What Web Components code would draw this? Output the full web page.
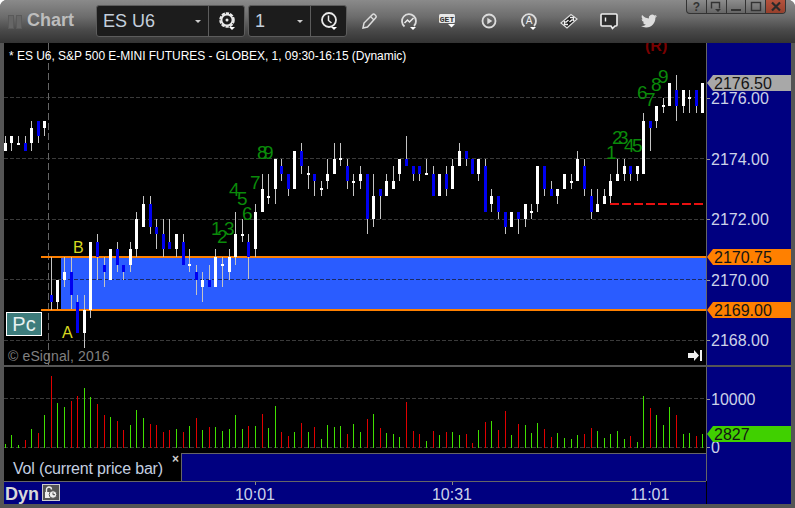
<!DOCTYPE html>
<html>
<head>
<meta charset="utf-8">
<title>Chart</title>
<style>
  html, body { margin: 0; background: #fff; }
  body { font-family: "Liberation Sans", Arial, sans-serif; width: 795px; height: 508px; overflow: hidden; }
</style>
</head>
<body>
<chart-window>
  <chart-toolbar slot="toolbar">
    <symbol-box slot="symbol" value="ES U6" box-width="149" text-size="18" icon="gear"></symbol-box>
    <symbol-box slot="interval" value="1" box-width="99" text-size="18" icon="clock"></symbol-box>
  </chart-toolbar>
  <price-panel slot="price">
    <span slot="title">* ES U6, S&amp;P 500 E-MINI FUTURES - GLOBEX, 1, 09:30-16:15 (Dynamic)</span>
    <span slot="copyright">© eSignal, 2016</span>
  </price-panel>
  <price-axis slot="price-axis">
    <axis-label y="48">2176.00</axis-label>
    <axis-label y="109">2174.00</axis-label>
    <axis-label y="169">2172.00</axis-label>
    <axis-label y="230">2170.00</axis-label>
    <axis-label y="290">2168.00</axis-label>
    <price-tag y="32" color="#a8a8a8">2176.50</price-tag>
    <price-tag y="206" color="#ff8000">2170.75</price-tag>
    <price-tag y="259" color="#ff8000">2169.00</price-tag>
  </price-axis>
  <volume-panel slot="volume"></volume-panel>
  <volume-legend slot="legend">Vol (current price bar)</volume-legend>
  <time-axis slot="time">
    <time-label x="251">10:01</time-label>
    <time-label x="448">10:31</time-label>
    <time-label x="646">11:01</time-label>
  </time-axis>
  <volume-axis slot="volume-axis">
    <axis-label y="25">10000</axis-label>
    <axis-label y="73" style="clip-path: inset(-2px -2px 3px -8px)">0</axis-label>
    <price-tag y="59" color="#40d000">2827</price-tag>
  </volume-axis>
</chart-window>

<script>
// x, wick top, wick bottom, body top, body bottom, colour (w = up, b = down)
const CANDLES = [
  [5,136,151,143,151,"w"],[11,136,151,136,143,"w"],[18,136,145,143,145,"w"],[25,136,151,143,151,"b"],
  [31,121,151,128,143,"w"],[38,121,143,121,136,"b"],[44,121,136,121,128,"w"],[51,257,310,295,302,"b"],
  [57,280,309,280,302,"w"],[64,257,287,272,280,"w"],[71,257,309,272,295,"b"],[77,295,333,302,333,"b"],
  [84,295,348,310,333,"w"],[90,242,318,242,310,"w"],[97,234,280,242,257,"b"],[104,257,287,265,272,"b"],
  [110,249,280,249,280,"w"],[117,242,272,249,265,"b"],[123,265,280,265,272,"b"],[130,242,272,249,265,"w"],
  [136,212,257,219,249,"w"],[143,196,227,204,227,"w"],[150,196,234,204,227,"b"],[156,219,249,227,234,"b"],
  [163,219,257,234,249,"b"],[169,219,249,242,249,"b"],[176,234,257,234,249,"w"],[183,234,265,242,265,"b"],
  [189,249,272,264,266,"w"],[196,265,295,272,280,"b"],[202,272,302,280,287,"w"],[209,265,287,280,287,"b"],
  [215,249,287,257,287,"w"],[222,257,287,264,266,"w"],[229,249,280,257,272,"w"],[235,212,265,234,257,"w"],
  [242,219,242,234,236,"w"],[248,234,279,242,257,"b"],[255,204,257,212,249,"w"],[262,174,212,189,212,"w"],
  [268,174,204,196,198,"w"],[275,159,204,159,189,"w"],[281,159,181,166,174,"b"],[288,174,196,174,189,"b"],
  [294,151,189,151,189,"w"],[301,143,174,151,166,"b"],[308,166,189,173,175,"w"],[314,174,196,174,181,"b"],
  [321,181,196,188,190,"w"],[327,159,189,174,181,"w"],[334,143,174,159,174,"w"],[340,143,166,158,160,"w"],
  [347,159,189,166,181,"b"],[353,174,196,181,183,"w"],[360,166,189,174,181,"w"],[367,174,234,174,219,"b"],
  [373,174,227,196,219,"w"],[380,189,219,189,196,"b"],[386,174,196,181,196,"w"],[393,166,189,181,189,"w"],
  [399,159,181,159,174,"w"],[406,136,166,159,166,"b"],[413,166,181,166,174,"b"],[419,166,181,166,174,"b"],
  [426,159,175,173,175,"w"],[433,166,196,174,196,"b"],[439,174,196,174,196,"w"],[446,166,196,174,189,"b"],
  [452,159,189,166,189,"w"],[459,143,166,151,166,"w"],[466,151,166,151,159,"b"],[472,159,174,159,174,"b"],
  [478,159,181,159,174,"w"],[485,159,212,166,212,"b"],[491,189,212,196,204,"w"],[498,196,219,196,212,"b"],
  [505,212,234,212,227,"b"],[511,212,227,212,227,"w"],[518,212,234,212,219,"b"],[525,204,227,204,219,"w"],
  [531,204,219,211,213,"w"],[537,166,212,166,204,"w"],[544,166,196,166,189,"b"],[551,181,196,189,196,"b"],
  [557,189,204,189,196,"w"],[564,174,189,174,189,"w"],[571,174,189,181,183,"w"],[577,151,181,159,181,"w"],
  [584,159,196,166,189,"b"],[591,189,219,196,212,"b"],[597,189,212,204,212,"w"],[604,189,204,196,204,"w"],
  [610,174,204,181,196,"w"],[617,159,181,174,181,"w"],[624,159,181,166,174,"w"],[630,166,181,166,174,"b"],
  [637,166,181,166,174,"w"],[643,113,174,121,174,"w"],[650,121,151,121,128,"b"],[656,106,128,106,121,"w"],
  [663,98,113,105,107,"w"],[669,83,106,83,106,"w"],[676,75,121,90,106,"b"],[683,90,113,90,106,"w"],
  [689,90,113,97,99,"w"],[696,90,113,90,106,"b"],[702,83,113,83,113,"w"]
];

// bar height per candle: positive is a green bar, negative a red one
const VOLUMES = [
  4,13,3,-8,19,-15,33,-72,45,41,-47,-52,60,51,-44,-33,31,-27,-18,23,38,30,-24,-23,-16,-18,19,-16,22,-30,
  18,-21,21,17,19,33,19,-22,22,-34,20,42,-16,-12,16,-25,16,-21,9,23,21,22,-14,24,16,-29,34,-20,15,14,
  11,-46,-17,-14,7,-17,13,-16,16,13,-14,-5,18,-26,27,-18,-37,13,-24,23,15,25,-19,-11,15,10,9,13,-14,-20,
  17,10,14,17,9,-12,6,52,-40,33,23,41,-33,14,15,-12,14
];

// wave count digits: text, x, baseline
const COUNTS = [
  ["1",211,235],["2",217,243],["3",224,235],["4",229,196],["5",237,205],["6",242,220],["7",250,189],["8",257,159],["9",263,159],
  ["1",606,159],["2",612,144],["3",618,144],["4",624,152],["5",632,152],["6",637,99],["7",645,106],["8",651,91],["9",658,83]
];

const ICONS = {
  gear: `<svg width="20" height="20" viewBox="0 0 20 20"><circle cx="10" cy="9" r="6.500" fill="none" stroke="#e8e8e8" stroke-width="2.600" stroke-dasharray="3.200 .9"/><circle cx="10" cy="9" r="5.500" fill="none" stroke="#e8e8e8" stroke-width="1.800"/><circle cx="10" cy="9" r="1.500" fill="#e8e8e8"/><path d="M12 16h6l-3 3z" fill="#fff"/></svg>`,
  clock: `<svg width="20" height="20" viewBox="0 0 20 20"><circle cx="10" cy="9" r="7" fill="none" stroke="#e8e8e8" stroke-width="1.800"/><path d="M9.500 4.500v5l3 2.500" fill="none" stroke="#e8e8e8" stroke-width="1.500"/><path d="M12 16h6l-3 3z" fill="#fff"/></svg>`,
  pencil: `<svg width="20" height="20" viewBox="0 0 20 20"><path d="M4 17l1-5L13.500 3.500a1.500 1.500 0 0 1 2.200 0l1 1a1.500 1.500 0 0 1 0 2.200L8.500 16z" fill="none" stroke="#ddd" stroke-width="1.500"/><path d="M11.500 5.500l3.500 3.500" stroke="#ddd" stroke-width="1.200"/></svg>`,
  trend: `<svg width="20" height="20" viewBox="0 0 20 20"><path d="M15 15a7 7 0 1 0-9.500 .500" fill="none" stroke="#ddd" stroke-width="1.800"/><path d="M5.500 12l3-3 2 2 4-4" fill="none" stroke="#eee" stroke-width="1.500"/><path d="M11 16h6l-3 3z" fill="#fff"/></svg>`,
  get: `<svg width="22" height="20" viewBox="0 0 22 20"><rect x="1" y="3" width="16" height="9" rx="1.500" fill="#e8e8e8"/><text x="9" y="10.500" text-anchor="middle" font-family="Liberation Mono" font-weight="700" font-size="8" fill="#333">GET</text><path d="M10 13h7l-3.500 3.500z" fill="#fff"/></svg>`,
  play: `<svg width="20" height="20" viewBox="0 0 20 20"><circle cx="10" cy="10" r="6.500" fill="none" stroke="#ddd" stroke-width="1.800"/><path d="M8.300 6.800v6.400l5-3.200z" fill="#ddd"/></svg>`,
  auto: `<svg width="20" height="20" viewBox="0 0 20 20"><path d="M15 15a7 7 0 1 0-9.500 .500" fill="none" stroke="#ddd" stroke-width="1.800"/><text x="10" y="13" text-anchor="middle" font-size="10" fill="#eee" font-family="Liberation Sans">A</text><path d="M11 16h6l-3 3z" fill="#fff"/></svg>`,
  swap: `<svg width="20" height="20" viewBox="0 0 20 20"><path d="M2 12L12 3.500 18 8 8 17z" fill="#1c1c1c" stroke="#ddd" stroke-width="1.200"/><path d="M6.500 11.500l3-2.500M5.500 10v3.500H9M13.500 8.500l-3 2.500M14.500 10V6.500H11" fill="none" stroke="#eee" stroke-width="1.500"/></svg>`,
  talk: `<svg width="20" height="20" viewBox="0 0 20 20"><path d="M3 3h14a1 1 0 0 1 1 1v10a1 1 0 0 1-1 1h-1l-2.500 2.500L12 15H3a1 1 0 0 1-1-1V4a1 1 0 0 1 1-1z" fill="#2e2e2e" stroke="#eee" stroke-width="1.600"/><path d="M6.500 6.500v4" stroke="#eee" stroke-width="1.400"/></svg>`,
  bird: `<svg width="16" height="16" viewBox="0 0 24 24"><path fill="#ddd" d="M23.950 4.570a10 10 0 0 1-2.820.77 4.960 4.960 0 0 0 2.160-2.720c-.95.56-2 .96-3.120 1.190a4.920 4.920 0 0 0-8.380 4.480C7.690 8.090 4.070 6.130 1.640 3.160a4.820 4.820 0 0 0-.66 2.470c0 1.710.87 3.200 2.180 4.080a4.900 4.900 0 0 1-2.230-.62v.06a4.920 4.920 0 0 0 3.950 4.830 5 5 0 0 1-2.210.08 4.940 4.940 0 0 0 4.600 3.420A9.870 9.870 0 0 1 0 19.540a13.940 13.940 0 0 0 7.550 2.210c9.050 0 14-7.500 14-13.980 0-.21 0-.42-.02-.63A9.940 9.940 0 0 0 24 4.590z"/></svg>`
};

// small helper, every element below is the same open shadow + html
class ShadowElement extends HTMLElement {
  constructor() {
    super();
    this.attachShadow({ mode: "open" });
  }
  connectedCallback() {
    this.shadowRoot.innerHTML = this.markup();
  }
}

class ChartWindow extends ShadowElement {
  markup() {
    return `<style>
      :host { display: flex; flex-direction: column; width: 795px; height: 508px; background: #555; border-radius: 7px 7px 0 0; overflow: hidden; }
      .body { height: 461px; margin: 0 4px 4px; display: grid; grid-template-columns: 702px 1px 84px; grid-template-rows: 322px 2px 137px; background: #000; }
      .vline { background: #666; }
      .hline { grid-column: 1 / 4; background: #555; }
      .lower { display: flex; flex-direction: column; }
      .rule { height: 1px; background: #666; flex: none; }
    </style>
    <slot name="toolbar"></slot>
    <div class="body">
      <slot name="price"></slot>
      <div class="vline"></div>
      <slot name="price-axis"></slot>
      <div class="hline"></div>
      <div class="lower">
        <slot name="volume"></slot>
        <div class="rule" style="margin-left:178px"></div>
        <slot name="legend"></slot>
        <div class="rule"></div>
        <slot name="time"></slot>
      </div>
      <div class="vline" style="height:114px"></div>
      <slot name="volume-axis"></slot>
    </div>`;
  }
}

class ChartToolbar extends ShadowElement {
  markup() {
    const cells = ["pencil", "trend", "get", "play", "auto", "swap", "talk", "bird"]
      .map((name) => `<span class="cell">${ICONS[name]}</span>`).join("");
    return `<style>
      :host { display: flex; align-items: center; height: 43px; flex: none; padding-left: 8px; box-sizing: border-box;
        background: linear-gradient(#8a8a8a 0, #6c6c6c 17px, #4a4a4a 30px, #333 43px); }
      .grip { display: flex; gap: 2px; width: 14px; flex: none; }
      .grip i { width: 6px; height: 14px; box-sizing: border-box; border: 1px solid #5a5a5a; background: #666; }
      .name { width: 74px; padding-left: 5px; box-sizing: border-box; flex: none; font: bold 18px "Liberation Sans", sans-serif; color: #bdbdbd; margin-top: -2px; }
      .boxes { display: flex; gap: 3px; flex: none; align-self: flex-start; margin-top: 5px; }
      .icons { display: flex; margin-left: 2px; }
      .cell { width: 40px; height: 30px; display: flex; align-items: center; justify-content: center; margin-top: -2px; }
      .caption { margin-left: auto; margin-right: 9px; align-self: flex-start; display: flex; height: 14px; width: 100px; flex: none;
        border: 1px solid #333; border-top: 0; box-sizing: border-box; border-radius: 0 0 4px 4px; overflow: hidden;
        background: linear-gradient(#8c8c8c, #666); }
      .caption span { flex: 1; display: flex; align-items: center; justify-content: center; border-left: 1px solid #333;
        font: bold 12px "Liberation Sans", sans-serif; color: #333; }
      .caption span:first-child { border-left: 0; }
      .caption .close { background: linear-gradient(#b5523c, #96402c); }
    </style>
    <div class="grip"><i></i><i></i></div>
    <div class="name">Chart</div>
    <div class="boxes"><slot name="symbol"></slot><slot name="interval"></slot></div>
    <div class="icons">${cells}</div>
    <div class="caption">
      <span>?</span>
      <span><svg width="12" height="11" viewBox="0 0 12 11"><path d="M1.500 7.500V1.500h8v6" fill="none" stroke="#333" stroke-width="1.400"/><path d="M5 8h6l-3 3z" fill="#333"/></svg></span>
      <span><svg width="12" height="11" viewBox="0 0 12 11"><path d="M1 9h10" stroke="#333" stroke-width="2"/></svg></span>
      <span><svg width="12" height="11" viewBox="0 0 12 11"><rect x="1.500" y="1.500" width="9" height="8" fill="none" stroke="#333" stroke-width="1.400"/></svg></span>
      <span class="close"><svg width="12" height="11" viewBox="0 0 12 11"><path d="M2 1.500l8 8M10 1.500l-8 8" stroke="#2a2a2a" stroke-width="2.200"/></svg></span>
    </div>`;
  }
}

class SymbolBox extends ShadowElement {
  markup() {
    const width = this.getAttribute("box-width");
    return `<style>
      :host { display: flex; width: ${width}px; height: 32px; box-sizing: border-box; background: #1c1c1c; border: 1px solid #5c5c5c; border-radius: 3px; }
      .value { flex: 1; display: flex; align-items: center; padding-left: 6px; font: ${this.getAttribute("text-size")}px "Liberation Sans", sans-serif; color: #c4cfdc; position: relative; }
      .value::after { content: ""; position: absolute; right: 7px; top: 14px; border: 3px solid transparent; border-top: 3px solid #ccc; }
      .action { width: 35px; flex: none; border-left: 1px solid #5c5c5c; display: flex; align-items: center; justify-content: center; }
    </style>
    <div class="value">${this.getAttribute("value")}</div>
    <div class="action">${ICONS[this.getAttribute("icon")]}</div>`;
  }
}

class PricePanel extends ShadowElement {
  markup() {
    const grid = [97.5, 158.5, 219.5, 340.5];
    const before = grid.map((y) => `<path d="M4 ${y}H706" stroke="#3a3a3a" stroke-dasharray="4 2"/>`).join("");
    const candles = CANDLES.map(([x, wt, wb, bt, bb, c]) =>
      `<rect x="${x}" y="${wt}" width="1" height="${wb - wt}" fill="#c4c4c4"/>` +
      `<rect x="${x - 1}" y="${bt}" width="3" height="${bb - bt}" fill="${c === "w" ? "#fff" : "#0000f0"}"/>`).join("");
    const counts = COUNTS.map(([t, x, y]) => `<text x="${x}" y="${y}" class="count">${t}</text>`).join("");
    return `<style>
      :host { display: block; position: relative; width: 702px; height: 322px; background: #000; overflow: hidden; }
      svg { display: block; }
      text { font-family: "Liberation Sans", sans-serif; }
      .count { font-size: 19px; fill: #0a8a0a; }
      .title { position: absolute; left: 5px; top: 6px; font: 12px/14px "Liberation Sans", sans-serif; letter-spacing: -0.03px; color: #fff; white-space: nowrap; }
      .copy { position: absolute; left: 4px; top: 305px; font: 14px/16px "Liberation Sans", sans-serif; letter-spacing: 0.13px; color: #808080; white-space: nowrap; }
      .pc { position: absolute; left: 2px; top: 269px; width: 36px; height: 24px; box-sizing: border-box; background: #3d7c7c; border: 1px solid #fff;
        display: flex; align-items: center; justify-content: center; font: 20px "Liberation Sans", sans-serif; color: #e6f0f0; }
    </style>
    <svg width="702" height="322" viewBox="4 43 702 322">
      ${before}
      <path d="M4 279.500H62" stroke="#3a3a3a" stroke-dasharray="4 2"/>
      <path d="M48.500 43V365" stroke="#666" stroke-dasharray="7 3"/>
      <rect x="61" y="257" width="645" height="53" fill="#2a5cff"/>
      <path d="M62 279.500H706" stroke="#1a2a66" stroke-dasharray="4 2"/>
      <rect x="41" y="256" width="665" height="2" fill="#ff8000"/>
      <rect x="41" y="309" width="665" height="2" fill="#ff8000"/>
      ${candles}
      <path d="M610 204H704" stroke="#e81010" stroke-width="2" stroke-dasharray="9 3"/>
      ${counts}
      <text x="73" y="253" font-size="16" fill="#d8d820">B</text>
      <text x="62" y="338" font-size="16" fill="#d8d820">A</text>
      <text x="645" y="51" font-size="16" font-weight="bold" fill="#7a0000">(R)</text>
      <path d="M688 353h6v-3l5 5.500-5 5.500v-3h-6z" fill="#f0f0f0"/><rect x="700" y="350" width="2" height="11" fill="#f0f0f0"/>
    </svg>
    <div class="title"><slot name="title"></slot></div>
    <div class="copy"><slot name="copyright"></slot></div>
    <div class="pc">Pc</div>`;
  }
}

class PriceAxis extends ShadowElement {
  markup() {
    return `<style>
      :host { display: block; position: relative; width: 84px; height: 322px; background: #000080; }
    </style><slot></slot>`;
  }
}

class VolumeAxis extends ShadowElement {
  markup() {
    return `<style>
      :host { display: block; position: relative; width: 84px; height: 137px; background: #000080; grid-column: 3; grid-row: 3; }
    </style><slot></slot>`;
  }
}

class AxisLabel extends ShadowElement {
  markup() {
    return `<style>
      :host { position: absolute; left: 4px; top: ${this.getAttribute("y")}px; font: 16px/16px "Liberation Sans", sans-serif; color: #ccd2e8; }
      :host::before { content: ""; position: absolute; left: -4px; top: 7px; width: 3px; height: 1px; background: #999; }
    </style><slot></slot>`;
  }
}

class PriceTag extends ShadowElement {
  markup() {
    return `<style>
      :host { position: absolute; left: 0; width: 84px; height: 16px; top: ${this.getAttribute("y")}px; box-sizing: border-box; padding: 1px 0 0 7px;
        background: ${this.getAttribute("color")}; clip-path: polygon(6px 0, 100% 0, 100% 100%, 6px 100%, 0 50%);
        font: 16px/15px "Liberation Sans", sans-serif; color: #141414; }
    </style><slot></slot>`;
  }
}

class VolumePanel extends ShadowElement {
  markup() {
    const bars = VOLUMES.map((v, i) => {
      const h = Math.abs(v);
      return `<rect x="${CANDLES[i][0]}" y="${448 - h}" width="1" height="${h}" fill="${v > 0 ? "#40e000" : "#e00000"}"/>`;
    }).join("");
    return `<style>
      :host { display: block; width: 702px; height: 86px; background: #000; flex: none; }
      svg { display: block; }
    </style>
    <svg width="702" height="86" viewBox="4 367 702 86">
      <path d="M4 398.500H706M4 447.500H706" stroke="#3a3a3a" stroke-dasharray="4 2"/>
      ${bars}
    </svg>`;
  }
}

class VolumeLegend extends ShadowElement {
  markup() {
    return `<style>
      :host { display: flex; height: 27px; flex: none; background: #000080; }
      .label { width: 177px; background: #000; border-right: 1px solid #666; margin-top: -1px; position: relative; box-sizing: content-box;
        padding-top: 1px; font: 16px/16px "Liberation Sans", sans-serif; letter-spacing: -0.17px; color: #c4cfe0; }
      .label span { position: absolute; left: 9px; top: 8px; white-space: nowrap; }
      .label b { position: absolute; left: 168px; top: 0; font: bold 12px/12px "Liberation Sans", sans-serif; color: #ccc; }
    </style>
    <div class="label"><span><slot></slot></span><b>×</b></div>`;
  }
}

class TimeAxis extends ShadowElement {
  markup() {
    return `<style>
      :host { display: flex; align-items: center; height: 22px; flex: none; position: relative; background: #000080; padding-left: 1px; }
      .dyn { font: bold 18px/20px "Liberation Sans", sans-serif; color: #d8d8d8; margin-top: 1px; }
      .lock { width: 18px; height: 17px; box-sizing: border-box; margin: -1px 0 0 3px; background: #555; border: 1px solid #ccc; display: flex; align-items: center; justify-content: center; }
    </style>
    <span class="dyn">Dyn</span>
    <span class="lock"><svg width="14" height="13" viewBox="0 0 14 13">
      <path d="M2.500 6V3.500a2.500 2.500 0 0 1 5 0" fill="none" stroke="#eee" stroke-width="1.400"/>
      <rect x="1" y="6" width="6" height="6" fill="#eee"/>
      <circle cx="9" cy="8.500" r="3.800" fill="#eee" stroke="#555"/>
      <path d="M9 6.500v2.200h2" fill="none" stroke="#444"/>
    </svg></span>
    <slot></slot>`;
  }
}

class TimeLabel extends ShadowElement {
  markup() {
    return `<style>
      :host { position: absolute; left: ${this.getAttribute("x") - 23}px; width: 46px; top: 5px; text-align: center; font: 16px/16px "Liberation Sans", sans-serif; color: #ccd2e8; }
      :host::before { content: ""; position: absolute; left: 23px; top: -5px; width: 1px; height: 3px; background: #888; }
    </style><slot></slot>`;
  }
}

customElements.define("chart-window", ChartWindow);
customElements.define("chart-toolbar", ChartToolbar);
customElements.define("symbol-box", SymbolBox);
customElements.define("price-panel", PricePanel);
customElements.define("price-axis", PriceAxis);
customElements.define("volume-axis", VolumeAxis);
customElements.define("axis-label", AxisLabel);
customElements.define("price-tag", PriceTag);
customElements.define("volume-panel", VolumePanel);
customElements.define("volume-legend", VolumeLegend);
customElements.define("time-axis", TimeAxis);
customElements.define("time-label", TimeLabel);
</script>
</body>
</html>
